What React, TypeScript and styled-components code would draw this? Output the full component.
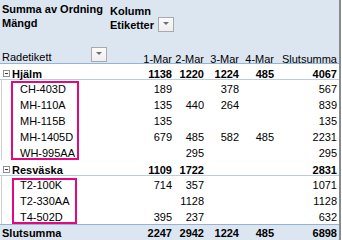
import styled, { createGlobalStyle } from "styled-components";

const GlobalStyle = createGlobalStyle`
  body {
    margin: 0;
    background: #fff;
  }
`;

const COLS = "110px 64px 32px 35px 35px 63px";

type Row = {
  label: string;
  values: (number | null)[];
};

type Group = {
  label: string;
  values: (number | null)[];
  children: Row[];
  frame: { left: number; width: number; top: number; bottom: number };
};

const groups: Group[] = [
  {
    label: "Hjälm",
    values: [1138, 1220, 1224, 485, 4067],
    frame: { left: 11, width: 68, top: 1, bottom: 0 },
    children: [
      { label: "CH-403D", values: [189, null, 378, null, 567] },
      { label: "MH-110A", values: [135, 440, 264, null, 839] },
      { label: "MH-115B", values: [135, null, null, null, 135] },
      { label: "MH-1405D", values: [679, 485, 582, 485, 2231] },
      { label: "WH-995AA", values: [null, 295, null, null, 295] },
    ],
  },
  {
    label: "Resväska",
    values: [1109, 1722, null, null, 2831],
    frame: { left: 12, width: 65, top: 2, bottom: 0 },
    children: [
      { label: "T2-100K", values: [714, 357, null, null, 1071] },
      { label: "T2-330AA", values: [null, 1128, null, null, 1128] },
      { label: "T4-502D", values: [395, 237, null, null, 632] },
    ],
  },
];

const totals = [2247, 2942, 1224, 485, 6898];
const columns = ["1-Mar", "2-Mar", "3-Mar", "4-Mar", "Slutsumma"];

const Sheet = styled.div`
  width: 339px;
  height: 240px;
  border-right: 2px solid #8a8a8a;
  font-family: "Liberation Sans", Arial, sans-serif;
  font-size: 11px;
  color: #000;
  overflow: hidden;
`;

const Header = styled.div`
  background: #dce6f1;
  border-bottom: 1px solid #95b3d7;
  display: flex;
  flex-direction: column;
`;

const HeaderTop = styled.div`
  display: grid;
  grid-template-columns: 110px 64px;
  height: 32px;
  font-weight: bold;
  line-height: 14px;
`;

const TitleCell = styled.div`
  padding: 2px 2px 0 2px;
`;

const ColumnTitle = styled.div`
  display: flex;
  padding-top: 4px;
`;

const ColumnTitleText = styled.div`
  flex: 1;
`;

const Spacer = styled.div`
  height: 15px;
`;

const LabelRow = styled.div`
  display: grid;
  grid-template-columns: ${COLS};
  height: 16px;
  line-height: 16px;
`;

const RowLabelHead = styled.div`
  display: flex;
  align-items: flex-start;
  justify-content: space-between;
  padding: 2px 3px 0 2px;
  box-sizing: border-box;
  height: 16px;
`;

const ColHead = styled.div`
  text-align: right;
  padding: 4px 2px 0 0;
  box-sizing: border-box;
  height: 16px;
  white-space: nowrap;
`;

const DropButton = styled.div<{ $offset: number }>`
  width: 16px;
  height: 15px;
  box-sizing: border-box;
  margin-top: ${(p) => p.$offset}px;
  border: 1px solid #a9a9a9;
  background: linear-gradient(#fbfbfb, #eeeeee);
  display: flex;
  align-items: center;
  justify-content: center;

  &::after {
    content: "";
    width: 0;
    height: 0;
    margin-top: -2px;
    border-left: 3px solid transparent;
    border-right: 3px solid transparent;
    border-top: 3px solid #6e6e6e;
  }
`;

type RowKind = "group" | "child" | "total";

const DataRow = styled.div<{ $kind: RowKind }>`
  --pad-top: ${(p) => (p.$kind === "group" ? 2 : p.$kind === "child" ? 1 : 0)}px;
  display: grid;
  grid-template-columns: ${COLS};
  height: 16px;
  box-sizing: border-box;
  line-height: 16px;
  font-weight: ${(p) => (p.$kind === "child" ? "normal" : "bold")};
  border-bottom: ${(p) => (p.$kind === "group" ? "1px solid #b8cce4" : "none")};
  border-top: ${(p) => (p.$kind === "total" ? "1px solid #95b3d7" : "none")};
  background: ${(p) => (p.$kind === "total" ? "#dce6f1" : "transparent")};
`;

const LabelCell = styled.div<{ $indent: number }>`
  display: flex;
  align-items: flex-start;
  padding: var(--pad-top) 0 0 ${(p) => p.$indent}px;
  box-sizing: border-box;
  height: 16px;
  white-space: nowrap;
`;

const Toggle = styled.span`
  width: 7px;
  height: 7px;
  box-sizing: border-box;
  margin: 4px 2px 0 0;
  border: 1px solid #8f8f8f;
  background: #fff;
  display: flex;
  align-items: center;
  justify-content: center;

  &::after {
    content: "";
    width: 3px;
    height: 1px;
    background: #3a3a3a;
  }
`;

const NumCell = styled.div`
  text-align: right;
  padding: var(--pad-top) 2px 0 0;
  box-sizing: border-box;
  height: 16px;
`;

const ChildBlock = styled.div`
  position: relative;

  &::before {
    content: "";
    position: absolute;
    left: 1px;
    top: 0;
    bottom: 0;
    width: 1px;
    background: #d0d0d0;
  }
`;

const PinkFrame = styled.div<{ $left: number; $width: number; $top: number; $bottom: number }>`
  position: absolute;
  left: ${(p) => p.$left}px;
  width: ${(p) => p.$width}px;
  top: ${(p) => p.$top}px;
  bottom: ${(p) => p.$bottom}px;
  border: 2px solid #e4087f;
  box-sizing: border-box;
  pointer-events: none;
`;

function Values({ values }: { values: (number | null)[] }) {
  return (
    <>
      {values.map((v, i) => (
        <NumCell key={i}>{v ?? ""}</NumCell>
      ))}
    </>
  );
}

export default function App() {
  return (
    <>
      <GlobalStyle />
      <Sheet>
        <Header>
          <HeaderTop>
            <TitleCell>Summa av Ordning Mängd</TitleCell>
            <ColumnTitle>
              <ColumnTitleText>
                Kolumn
                <br />
                Etiketter
              </ColumnTitleText>
              <DropButton $offset={13} />
            </ColumnTitle>
          </HeaderTop>
          <Spacer />
          <LabelRow>
            <RowLabelHead>
              Radetikett
              <DropButton $offset={-2} />
            </RowLabelHead>
            {columns.map((c) => (
              <ColHead key={c}>{c}</ColHead>
            ))}
          </LabelRow>
        </Header>

        {groups.map((g) => (
          <div key={g.label}>
            <DataRow $kind="group">
              <LabelCell $indent={3}>
                <Toggle />
                {g.label}
              </LabelCell>
              <Values values={g.values} />
            </DataRow>
            <ChildBlock>
              {g.children.map((c) => (
                <DataRow $kind="child" key={c.label}>
                  <LabelCell $indent={20}>{c.label}</LabelCell>
                  <Values values={c.values} />
                </DataRow>
              ))}
              <PinkFrame
                $left={g.frame.left}
                $width={g.frame.width}
                $top={g.frame.top}
                $bottom={g.frame.bottom}
              />
            </ChildBlock>
          </div>
        ))}

        <DataRow $kind="total">
          <LabelCell $indent={2}>Slutsumma</LabelCell>
          <Values values={totals} />
        </DataRow>
      </Sheet>
    </>
  );
}
